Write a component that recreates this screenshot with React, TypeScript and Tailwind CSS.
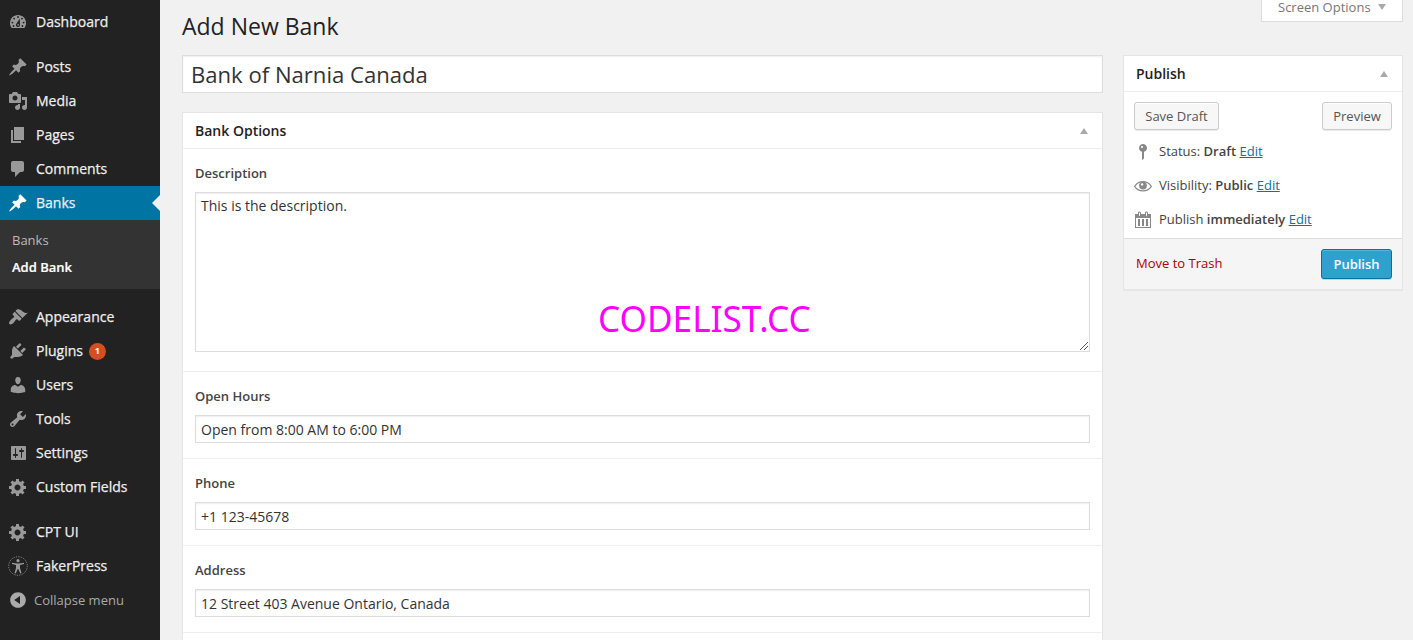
import type { ReactNode } from "react";

const ICONS = {
  post: "M10.44 3.02l1.82-1.82 6.36 6.35-1.83 1.82c-1.05-.68-2.48-.57-3.41.36l-.75.75c-.92.93-1.04 2.35-.35 3.41l-1.83 1.82-2.41-2.41-2.8 2.79c-.42.42-3.38 2.71-3.8 2.29s1.86-3.39 2.28-3.81l2.79-2.79L4.1 9.36l1.83-1.82c1.05.69 2.48.57 3.4-.36l.75-.75c.93-.92 1.05-2.35.36-3.41z",
  media:
    "M13 11V4c0-.55-.45-1-1-1h-1.67L9 1H5L3.67 3H2c-.55 0-1 .45-1 1v7c0 .55.45 1 1 1h10c.55 0 1-.45 1-1zM7 4.5c1.38 0 2.5 1.12 2.5 2.5S8.38 9.5 7 9.5 4.5 8.38 4.5 7 5.62 4.5 7 4.5zM14 6h5v10.5c0 1.38-1.12 2.5-2.5 2.5S14 17.88 14 16.5s1.12-2.5 2.5-2.5c.17 0 .34.02.5.05V9h-3V6zm-4 8.05V13h2v3.5c0 1.38-1.12 2.5-2.5 2.5S7 17.88 7 16.5 8.12 14 9.5 14c.17 0 .34.02.5.05z",
  page: "M6 15V2h10v13H6zm-1 1h8v2H3V5h2v11z",
  comments: "M5 2h9c1.1 0 2 .9 2 2v7c0 1.1-.9 2-2 2h-2l-5 5v-5H5c-1.1 0-2-.9-2-2V4c0-1.1.9-2 2-2z",
  appearance:
    "M14.48 11.06L7.41 3.99l1.5-1.5c.5-.56 2.3-.47 3.51.32 1.21.8 1.43 1.28 2.91 2.1 1.18.64 2.45 1.26 4.45.85zm-.71.71L6.7 4.7 4.93 6.47c-.39.39-.39 1.02 0 1.41l1.06 1.06c.39.39.39 1.03 0 1.42-.6.6-1.43 1.11-2.21 1.69-.35.26-.7.53-1.01.84C1.43 14.23.4 16.08 1.4 17.07c.99 1 2.84-.03 4.18-1.36.31-.31.58-.66.85-1.02.57-.78 1.08-1.61 1.69-2.21.39-.39 1.02-.39 1.41 0l1.06 1.06c.39.39 1.02.39 1.41 0z",
  plugins:
    "M13.11 4.36L9.87 7.6 8 5.73l3.24-3.24c.35-.34 1.05-.2 1.56.32.52.51.66 1.21.31 1.55zm-8 1.77l.91-1.12 9.01 9.01-1.19.84c-.71.71-2.63 1.16-3.82 1.16H6.14L4.9 17.26c-.59.59-1.54.59-2.12 0-.59-.58-.59-1.53 0-2.12l1.24-1.24v-3.88c0-1.13.4-3.19 1.09-3.89zm7.26 3.97l3.24-3.24c.34-.35 1.04-.21 1.55.31.52.51.66 1.21.31 1.55l-3.24 3.25z",
  users:
    "M10 9.25c-2.27 0-2.73-3.44-2.73-3.44C7 4.02 7.82 2 9.97 2c2.16 0 2.98 2.02 2.71 3.81 0 0-.41 3.44-2.68 3.44zm0 2.57L12.72 10c2.39 0 4.52 2.33 4.52 4.53v2.49s-3.65 1.13-7.24 1.13c-3.65 0-7.24-1.13-7.24-1.13v-2.49c0-2.25 1.94-4.48 4.47-4.48z",
  tools:
    "M16.68 9.77c-1.34 1.34-3.3 1.67-4.95.99l-5.41 6.52c-.99.99-2.59.99-3.58 0s-.99-2.59 0-3.57l6.52-5.42c-.68-1.65-.35-3.61.99-4.95 1.28-1.28 3.12-1.62 4.72-1.06l-2.89 2.89 2.82 2.82 2.86-2.87c.53 1.58.18 3.39-1.08 4.65zM3.81 16.21c.4.39 1.04.39 1.43 0 .4-.4.4-1.04 0-1.43-.39-.4-1.03-.4-1.43 0-.39.39-.39 1.03 0 1.43z",
  settings:
    "M18 16V4c0-.55-.45-1-1-1H4c-.55 0-1 .45-1 1v12c0 .55.45 1 1 1h13c.55 0 1-.45 1-1zM8 11h1c.55 0 1 .45 1 1s-.45 1-1 1H8v1.5c0 .28-.22.5-.5.5s-.5-.22-.5-.5V13H6c-.55 0-1-.45-1-1s.45-1 1-1h1V5.5c0-.28.22-.5.5-.5s.5.22.5.5V11zm5-2h-1c-.55 0-1-.45-1-1s.45-1 1-1h1V5.5c0-.28.22-.5.5-.5s.5.22.5.5V7h1c.55 0 1 .45 1 1s-.45 1-1 1h-1v5.5c0 .28-.22.5-.5.5s-.5-.22-.5-.5V9z",
  gear: "M18 12h-2.18c-.17.7-.44 1.35-.81 1.93l1.54 1.54-2.1 2.1-1.54-1.54c-.58.36-1.23.63-1.91.79V19H8v-2.18c-.68-.16-1.33-.43-1.91-.79l-1.54 1.54-2.12-2.12 1.54-1.54c-.36-.58-.63-1.23-.79-1.91H1V9.03h2.17c.16-.7.44-1.35.8-1.94L2.43 5.55l2.1-2.1 1.54 1.54c.58-.37 1.24-.64 1.93-.81V2h3v2.18c.68.16 1.33.43 1.91.79l1.54-1.54 2.12 2.12-1.54 1.54c.36.59.64 1.24.8 1.94H18V12zm-8.5 1.5c1.66 0 3-1.34 3-3s-1.34-3-3-3-3 1.34-3 3 1.34 3 3 3z",
  collapse:
    "M10 2.16c4.33 0 7.84 3.51 7.84 7.84s-3.51 7.84-7.84 7.84S2.16 14.33 2.16 10 5.71 2.16 10 2.16zm2 11.72V6.12L6.18 9.97z",
  pin: "M14 6c0 1.86-1.28 3.41-3 3.86V16c0 1-2 2-2 2V9.86c-1.72-.45-3-2-3-3.86 0-2.21 1.79-4 4-4s4 1.79 4 4zM8 5c0 .55.45 1 1 1s1-.45 1-1-.45-1-1-1-1 .45-1 1z",
  calendar:
    "M15 4h3v14H2V4h3V3c0-.83.67-1.5 1.5-1.5S8 2.17 8 3v1h4V3c0-.83.67-1.5 1.5-1.5S15 2.17 15 3v1zM6 3v2.5c0 .28.22.5.5.5s.5-.22.5-.5V3c0-.28-.22-.5-.5-.5S6 2.72 6 3zm7 0v2.5c0 .28.22.5.5.5s.5-.22.5-.5V3c0-.28-.22-.5-.5-.5s-.5.22-.5.5zm4 14V8H3v9h14zM7 16V9H5v7h2zm4 0V9H9v7h2zm4 0V9h-2v7h2z",
};

function Glyph({ d }: { d: string }) {
  return (
    <svg viewBox="0 0 20 20" className="size-5 shrink-0 fill-current" fillRule="evenodd">
      <path d={d} />
    </svg>
  );
}

function DashboardIcon() {
  return (
    <svg viewBox="0 0 20 20" className="size-5 shrink-0">
      <path fill="#999" d="M3.76 16h12.48c1.09-1.37 1.76-3.11 1.76-5 0-4.42-3.58-8-8-8s-8 3.58-8 8c0 1.89.67 3.63 1.76 5z" />
      <g fill="#222">
        <circle cx="10" cy="5" r=".95" />
        <circle cx="6.1" cy="6.6" r=".95" />
        <circle cx="13.9" cy="6.6" r=".95" />
        <circle cx="4.4" cy="10.6" r=".95" />
        <circle cx="15.6" cy="10.6" r=".95" />
        <circle cx="5.6" cy="14" r=".9" />
        <circle cx="14.4" cy="14" r=".9" />
        <path d="M11.8 6.6 12 13a2 2 0 1 1-3.8-.9z" />
      </g>
      <circle cx="10.1" cy="12.9" r=".8" fill="#999" />
    </svg>
  );
}

function AccessIcon() {
  return (
    <svg viewBox="0 0 20 20" className="size-5 shrink-0 overflow-visible">
      <circle cx="10" cy="10" r="9.3" fill="none" stroke="#999" strokeWidth=".9" strokeDasharray="1.2 1.235" />
      <circle cx="10" cy="4.7" r="1.6" fill="#999" />
      <path fill="#999" d="M4 6.8c2 .5 4 .7 6 .7s4-.2 6-.7v1.3l-4 1v3l1.5 5-1.2.4L10.3 13h-.6l-2 4.5-1.2-.4 1.5-5v-3l-4-1z" />
    </svg>
  );
}

function EyeIcon() {
  return (
    <svg viewBox="0 0 20 20" className="size-5 shrink-0">
      <path d="M1.7 10.3C3.6 7.3 6.6 5.6 10 5.6s6.4 1.7 8.3 4.7c-1.9 2.9-4.9 4.6-8.3 4.6s-6.4-1.7-8.3-4.6z" fill="none" stroke="#888" strokeWidth="1.2" />
      <circle cx="10" cy="9.6" r="3.9" fill="#888" />
      <circle cx="9.1" cy="8.4" r="1.2" fill="#fff" />
    </svg>
  );
}

function MenuItem({ icon, label, active, badge }: { icon: ReactNode; label: string; active?: boolean; badge?: string }) {
  return (
    <a
      className={`relative flex h-[34px] items-center pl-2 text-sm ${
        active ? "bg-[#0074a2] text-white" : "text-[#999]"
      }`}
    >
      {icon}
      <span className="ml-2 text-[#eee] [-webkit-text-stroke:0.25px_#eee]">{label}</span>
      {badge && (
        <span className="ml-1.5 mt-px flex size-[17px] items-center justify-center rounded-full bg-[#d54e21] text-[9px] font-bold text-white">
          {badge}
        </span>
      )}
      {active && (
        <svg viewBox="0 0 8 16" className="absolute top-[9px] right-0 h-4 w-2 fill-[#f1f1f1]">
          <path d="M8 0v16L0 8z" />
        </svg>
      )}
    </a>
  );
}

function Sidebar() {
  return (
    <nav className="flex h-full w-40 shrink-0 flex-col bg-[#222] pt-[5px]">
      <MenuItem icon={<DashboardIcon />} label="Dashboard" />
      <div className="mt-[11px]">
        <MenuItem icon={<Glyph d={ICONS.post} />} label="Posts" />
        <MenuItem icon={<Glyph d={ICONS.media} />} label="Media" />
        <MenuItem icon={<Glyph d={ICONS.page} />} label="Pages" />
        <MenuItem icon={<Glyph d={ICONS.comments} />} label="Comments" />
        <MenuItem icon={<Glyph d={ICONS.post} />} label="Banks" active />
      </div>
      <div className="flex h-[69px] flex-col bg-[#333] pt-[7px] pl-3 text-[13px]">
        <a className="h-[27px] leading-[27px] text-[#bbb]">Banks</a>
        <a className="h-[27px] leading-[27px] font-semibold text-white [-webkit-text-stroke:0.2px_#fff]">Add Bank</a>
      </div>
      <div className="mt-[11px]">
        <MenuItem icon={<Glyph d={ICONS.appearance} />} label="Appearance" />
        <MenuItem icon={<Glyph d={ICONS.plugins} />} label="Plugins" badge="1" />
        <MenuItem icon={<Glyph d={ICONS.users} />} label="Users" />
        <MenuItem icon={<Glyph d={ICONS.tools} />} label="Tools" />
        <MenuItem icon={<Glyph d={ICONS.settings} />} label="Settings" />
        <MenuItem icon={<Glyph d={ICONS.gear} />} label="Custom Fields" />
      </div>
      <div className="mt-[11px]">
        <MenuItem icon={<Glyph d={ICONS.gear} />} label="CPT UI" />
        <MenuItem icon={<AccessIcon />} label="FakerPress" />
      </div>
      <a className="flex h-[34px] items-center pl-2 text-[13px] text-[#aaa]">
        <Glyph d={ICONS.collapse} />
        <span className="ml-1.5 pt-0.5">Collapse menu</span>
      </a>
    </nav>
  );
}

function Panel({ title, className = "", children }: { title: string; className?: string; children: ReactNode }) {
  return (
    <section className={`border border-[#e5e5e5] bg-white shadow-[0_1px_1px_rgba(0,0,0,0.04)] ${className}`}>
      <h3 className="flex h-9 items-center justify-between border-b border-[#eee] pr-3.5 pl-3 text-sm font-semibold text-[#222]">
        {title}
        <svg viewBox="0 0 8 6" className="h-1.5 w-2 fill-[#aaa]">
          <path d="M4 0l4 6H0z" />
        </svg>
      </h3>
      {children}
    </section>
  );
}

const inputBox =
  "block w-full rounded-none border border-[#ddd] bg-white text-[#333] shadow-[inset_0_1px_2px_rgba(0,0,0,0.07)] outline-none";

function Field({ label, children }: { label: string; children: ReactNode }) {
  return (
    <div className="border-b border-[#eee] px-3 pt-3.5">
      <label className="block h-5 text-[13px] leading-5 font-semibold text-[#444]">{label}</label>
      <div className="relative mt-[9px]">{children}</div>
    </div>
  );
}

function TextField({ label, value }: { label: string; value: string }) {
  return (
    <Field label={label}>
      <input className={`${inputBox} mb-[15px] h-7 px-[5px] text-sm`} defaultValue={value} />
    </Field>
  );
}

function StatusRow({ icon, children }: { icon: ReactNode; children: ReactNode }) {
  return (
    <div className="flex h-[34px] items-center pl-[9px]">
      <span className="mt-px text-[#888]">{icon}</span>
      <span className="ml-1.5 pt-0.5">{children}</span>
    </div>
  );
}

function EditLink() {
  return <a className="text-[#0074a2] underline">Edit</a>;
}

const grayButton =
  "flex h-7 items-center justify-center rounded-[3px] border border-[#ccc] bg-[#f7f7f7] pt-0.5 text-[13px] text-[#555] shadow-[inset_0_1px_0_#fff,0_1px_0_rgba(0,0,0,0.08)]";

export default function App() {
  return (
    <div className="relative flex h-[640px] w-[1413px] overflow-hidden bg-[#f1f1f1] font-['Open_Sans',sans-serif] text-[13px] text-[#444]">
      <Sidebar />
      <div className="flex flex-1 pr-2.5 pl-[22px]">
        <main className="w-[921px]">
          <h1 className="flex h-[55px] items-center pb-0.5 text-[23px] text-[#222]">Add New Bank</h1>
          <input className={`${inputBox} h-[38px] px-2 text-[22.1px]`} defaultValue="Bank of Narnia Canada" />
          <Panel title="Bank Options" className="mt-[19px]">
            <Field label="Description">
              <textarea
                className={`${inputBox} mb-[19px] h-40 resize-none px-[5px] py-[3px] text-sm leading-5`}
                defaultValue="This is the description."
              />
              <svg viewBox="0 0 8 8" className="absolute right-0.5 bottom-0.5 size-2" shapeRendering="crispEdges">
                <path d="M0 8 8 0M4 8l4-4" stroke="#555" strokeWidth="1" />
              </svg>
            </Field>
            <TextField label="Open Hours" value="Open from 8:00 AM to 6:00 PM" />
            <TextField label="Phone" value="+1 123-45678" />
            <TextField label="Address" value="12 Street 403 Avenue Ontario, Canada" />
            <div className="h-10" />
          </Panel>
        </main>
        <aside className="ml-5 flex w-[280px] flex-col">
          <div className="mb-[33px] flex h-[22px] w-[142px] items-start self-end border border-t-0 border-[#ddd] bg-white pl-4 text-[#777]">
            <span className="h-[15px] leading-[15px]">Screen Options</span>
            <svg viewBox="0 0 8 6" className="mt-1 ml-[7px] h-1.5 w-2 fill-[#aaa]">
              <path d="M0 0h8L4 6z" />
            </svg>
          </div>
          <Panel title="Publish">
            <div className="flex justify-between px-2.5 pt-2.5 pb-1">
              <button className={`${grayButton} w-[85px]`}>Save Draft</button>
              <button className={`${grayButton} w-[70px]`}>Preview</button>
            </div>
            <StatusRow icon={<Glyph d={ICONS.pin} />}>
              Status: <b className="font-semibold">Draft</b> <EditLink />
            </StatusRow>
            <StatusRow icon={<EyeIcon />}>
              Visibility: <b className="font-semibold">Public</b> <EditLink />
            </StatusRow>
            <StatusRow icon={<Glyph d={ICONS.calendar} />}>
              Publish <b className="font-semibold">immediately</b> <EditLink />
            </StatusRow>
            <div className="mt-0.5 flex h-[51px] items-center justify-between border-t border-[#ddd] bg-[#f5f5f5] pr-2.5 pl-3">
              <a className="text-[#a00]">Move to Trash</a>
              <button className="flex h-[30px] w-[71px] items-center justify-center rounded-[3px] border border-[#0074a2] bg-[#2ea2cc] pt-px text-[13px] font-semibold text-white shadow-[inset_0_1px_0_rgba(120,200,230,0.5),0_1px_0_rgba(0,0,0,0.15)]">
                Publish
              </button>
            </div>
          </Panel>
        </aside>
      </div>
      <div className="absolute top-[293px] left-[598px] origin-left scale-x-95 font-['Noto_Sans',sans-serif] text-[37px] leading-[50px] text-[#f0f]">
        CODELIST.CC
      </div>
    </div>
  );
}
